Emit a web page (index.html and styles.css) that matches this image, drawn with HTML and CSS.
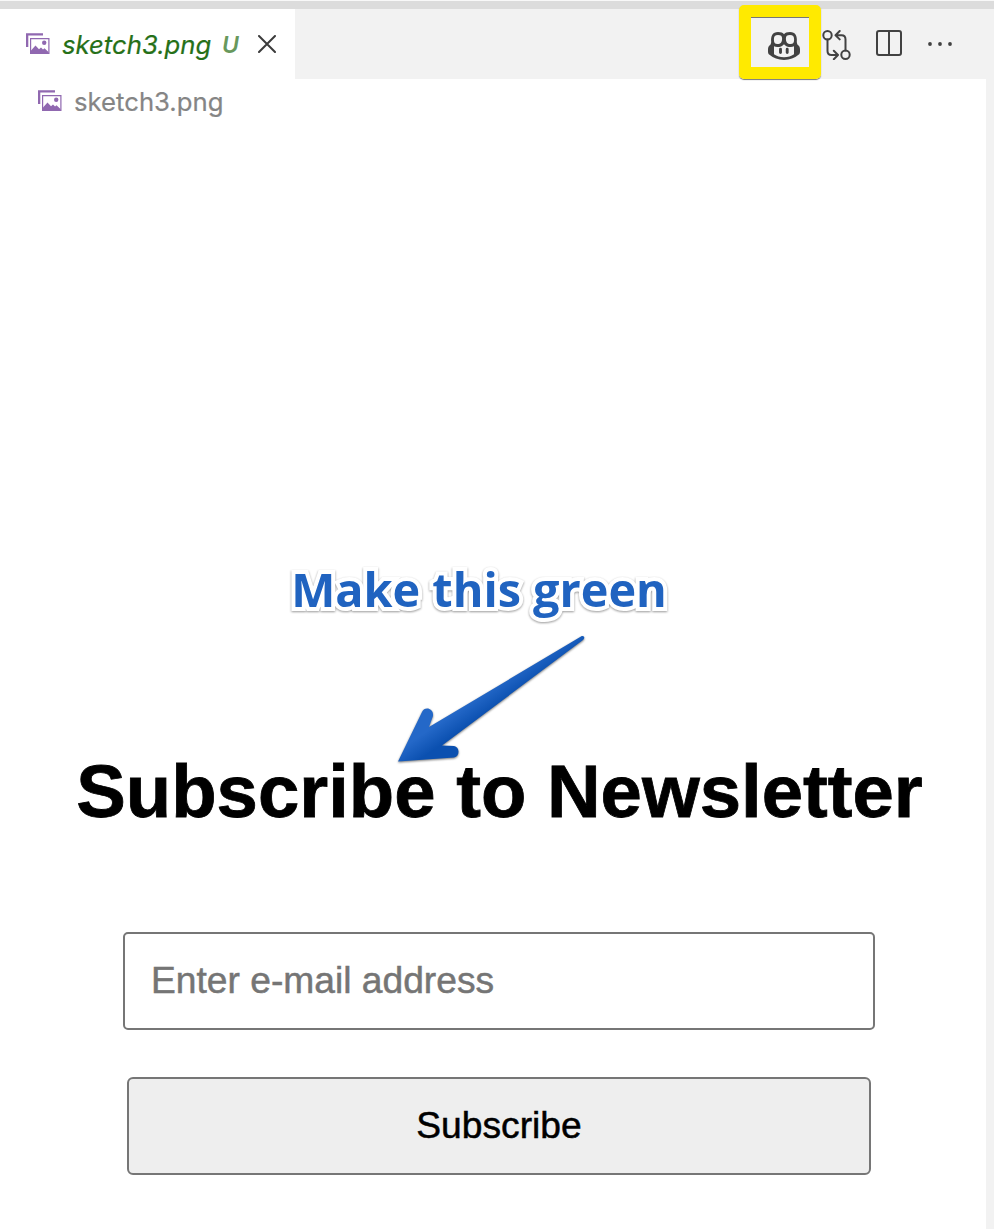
FILE: index.html
```html
<!DOCTYPE html>
<html lang="en">
<head>
<meta charset="utf-8">
<title>sketch3.png</title>
<link rel="stylesheet" href="styles.css">
</head>
<body>
<svg width="0" height="0" class="defs">
  <symbol id="image-file" viewBox="0 0 24 22">
    <path d="M0 .3H17V2.600H2.300V14H0Z"/>
    <path fill-rule="evenodd" d="M4 5H23.500V21H4ZM5.200 6.200V19.800H22.300V6.200Z"/>
    <circle cx="18.200" cy="9.700" r="2.200"/>
    <path d="M5 20V17.500L9.500 12.500L13 16.300L15 14.500L17 16.500L18.500 15.200L22.500 19V20Z"/>
  </symbol>
</svg>
<div class="topline"></div>
<header class="tabs">
  <div class="tab">
    <svg class="file"><use href="#image-file"/></svg>
    <span class="name">sketch3.png</span>
    <span class="status">U</span>
    <svg class="close" viewBox="0 0 18 18"><path d="M1 1L17 17M17 1L1 17"/></svg>
  </div>
  <nav class="actions">
    <div class="highlight">
      <svg class="copilot" viewBox="0 0 32 28">
        <path fill-rule="evenodd" d="M3.200 10C2.600 4 4.500 0 10 0C13 0 15 .7 16 2.200C17 .7 19 0 22 0C27.500 0 29.400 4 28.800 10C29 11.700 29.300 12.500 30.200 13.200C31.500 14.300 32 15.500 32 17.500V19.500C32 21 31.600 22 30.500 22.800C26.500 26 22 28 16 28S5.500 26 1.500 22.800C.4 22 0 21 0 19.500V17.500C0 15.500.5 14.300 1.800 13.200C2.700 12.500 3 11.700 3.200 10ZM10 2.900C7 2.900 5.900 4.300 5.900 7.500C5.900 10.500 6.800 12 9.400 12C12.800 12 14.100 10.200 14.100 6.500C14.100 3.800 13 2.900 10 2.900ZM22 2.900C19 2.900 17.900 3.800 17.900 6.500C17.900 10.200 19.200 12 22.600 12C25.200 12 26.100 10.500 26.100 7.500C26.100 4.300 25 2.900 22 2.900ZM16 12.200C14.500 14.300 12 15 9.300 15C8 15 6.900 14.700 6 14.200V22.200C8.800 24.200 12 25.200 16 25.200S23.200 24.200 26 22.200V14.200C25.100 14.700 24 15 22.700 15C20 15 17.500 14.300 16 12.200Z"/>
        <path class="eyes" d="M12.500 17.300V20.600M19.200 17.300V20.600"/>
      </svg>
    </div>
    <svg class="compare" viewBox="0 0 30 30">
      <circle cx="5.500" cy="5.300" r="4.200"/><circle cx="23.500" cy="24.700" r="4.200"/>
      <path d="M5.500 9.500V21C5.500 23.500 7 25 9.500 25H15.500M11.800 20.800L16 25L11.800 29.200M23.500 20.500V9.500C23.500 7 22 5.200 19.500 5.200H13.500M17.700 1L13.500 5.200L17.700 9.400"/>
    </svg>
    <svg class="split" viewBox="0 0 26 26"><rect x="1" y="1" width="24" height="24" rx="2"/><path d="M13 1V25"/></svg>
    <svg class="more" viewBox="0 0 24 4"><circle cx="2" cy="2" r="1.900"/><circle cx="12" cy="2" r="1.900"/><circle cx="22" cy="2" r="1.900"/></svg>
  </nav>
</header>
<main class="editor">
  <div class="crumb"><svg class="file"><use href="#image-file"/></svg><span>sketch3.png</span></div>
  <div class="note">Make this green</div>
  <h1 class="title">Subscribe to Newsletter</h1>
  <input class="email" type="text" placeholder="Enter e-mail address">
  <button class="subscribe">Subscribe</button>
  <svg class="arrow" viewBox="380 620 220 160">
    <defs><linearGradient id="blue" gradientUnits="userSpaceOnUse" x1="462" y1="707" x2="473" y2="723"><stop offset="0" stop-color="#2468c8"/><stop offset="1" stop-color="#0b50b0"/></linearGradient></defs>
    <path fill="url(#blue)" d="M398 761.500L422 712C424.500 706 434 708 433 716L429 727L581 636.500C584 635 585.500 638 583 640L442 745.500L454 746C460 747 460 756.500 454 757.500Z"/>
  </svg>
</main>
</body>
</html>
```
FILE: styles.css
```css
* { box-sizing: border-box; }
body { margin: 0; height: 1229px; overflow: hidden; background: #fff; font-family: Inter, sans-serif; position: relative; }
.defs { position: absolute; }
.topline { height: 9px; background: #dcdcdc; border-top: 1px solid #f8f8f8; }
.tabs { display: flex; justify-content: space-between; height: 70px; background: #f2f2f2; }
.tab { display: flex; align-items: center; width: 295px; padding-left: 26px; background: #fff; }
.file { width: 24px; height: 22px; fill: #9068b0; flex: none; }
.name { width: 160px; margin-left: 12px; color: #267018; font-size: 25.7px; font-style: italic; white-space: nowrap; -webkit-text-stroke: .2px; }
.status { width: 36px; margin-top: 1px; color: #68985c; font-size: 23px; font-style: italic; font-weight: 600; }
.close { width: 18px; height: 18px; fill: none; stroke: #3b3b3b; stroke-width: 2; stroke-linecap: round; }
.actions { display: flex; align-items: center; padding-right: 42px; }
.highlight { display: flex; align-items: center; justify-content: center; width: 82px; height: 74px; border: 12px solid #ffea00; border-radius: 5px; box-shadow: 0 1px 1px #777, inset 0 1px 0 #777; padding: 7px 0 0 8px; margin-top: -4px; }
.copilot { width: 32px; height: 28px; fill: #424242; flex: none; }
.eyes { stroke: #424242; stroke-width: 2.9; stroke-linecap: round; }
.compare { width: 30px; height: 30px; margin: 2px 0 0 1px; fill: none; stroke: #424242; stroke-width: 2; stroke-linecap: round; stroke-linejoin: round; }
.split { width: 26px; height: 26px; margin: -2px 0 0 24px; fill: none; stroke: #424242; stroke-width: 2; }
.more { width: 24px; height: 4px; margin-left: 26px; fill: #424242; }
.editor { display: flex; flex-direction: column; align-items: center; height: 1150px; border-right: 8px solid #f2f2f2; padding-left: 12px; }
.crumb { display: flex; align-items: center; align-self: flex-start; height: 44px; margin-bottom: 2px; padding-left: 26px; gap: 12px; color: #858585; font-size: 25.7px; -webkit-text-stroke: .2px; }
.note { margin-top: 428px; height: 72px; margin-right: 40px; color: #2063c0; font: 700 46.8px/72px "Open Sans", sans-serif; -webkit-text-stroke: 8px #fff; paint-order: stroke fill; filter: drop-shadow(0 1px 1px #999); white-space: nowrap; }
.title { margin: 89px 0 0 1px; height: 156px; color: #000; font: 700 74.3px/156px "Liberation Sans", Arial, sans-serif; white-space: nowrap; -webkit-text-stroke: .8px; }
.email { width: 752px; height: 98px; margin: 62px 0 0; padding: 0 26px 2px; border: 2px solid #767676; border-radius: 5px; background: #fff; font: 37.2px "Liberation Sans", Arial, sans-serif; -webkit-text-stroke: .5px; }
.email::placeholder { color: #757575; }
.subscribe { width: 744px; height: 98px; margin: 47px 0 0; padding: 0 0 1px; border: 2px solid #767676; border-radius: 6px; background: #eee; color: #000; font: 37.2px "Liberation Sans", Arial, sans-serif; -webkit-text-stroke: .5px; }
.arrow { position: absolute; left: 380px; top: 620px; width: 220px; height: 160px; filter: drop-shadow(0 1px 1px #777); }
```
